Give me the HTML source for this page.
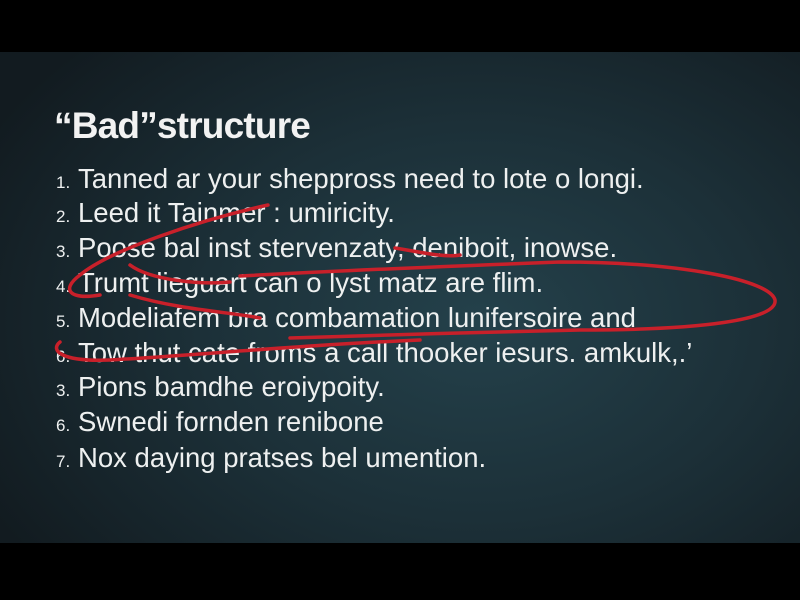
<!DOCTYPE html>
<html><head><meta charset="utf-8"><style>
html,body{margin:0;padding:0;width:800px;height:600px;overflow:hidden;background:#000}
.s{position:absolute;left:0;top:52px;width:800px;height:491px;background:radial-gradient(ellipse 70% 80% at 60% 55%,#24414b 0%,#1c3038 50%,#121b20 100%)}
h1{position:absolute;left:54px;top:105px;margin:0;font:bold 37px "Liberation Sans",sans-serif;color:#f2f2f2;letter-spacing:-0.8px}
.l{position:absolute;left:56px;font:27.5px "Liberation Sans",sans-serif;color:#eef0f0;white-space:nowrap}
.l b{font-weight:normal;font-size:17px;display:inline-block;width:22px}
svg{position:absolute;left:0;top:0}
</style></head><body>
<div class="s"></div>
<h1>“Bad”structure</h1>
<div class="l" style="top:163px"><b>1.</b>Tanned ar your sheppross need to lote o longi.</div>
<div class="l" style="top:197px"><b>2.</b>Leed it Tainmer : umiricity.</div>
<div class="l" style="top:232px"><b>3.</b>Poose bal inst stervenzaty, deniboit, inowse.</div>
<div class="l" style="top:267px"><b>4.</b>Trumt lieguart can o lyst matz are flim.</div>
<div class="l" style="top:302px"><b>5.</b>Modeliafem bra combamation lunifersoire and</div>
<div class="l" style="top:337px"><b>6.</b>Tow thut cate froms a call thooker iesurs. amkulk,.’</div>
<div class="l" style="top:371px"><b>3.</b>Pions bamdhe eroiypoity.</div>
<div class="l" style="top:406px"><b>6.</b>Swnedi fornden renibone</div>
<div class="l" style="top:442px"><b>7.</b>Nox daying pratses bel umention.</div>
<svg width="800" height="600" fill="none" stroke="#c8202a" stroke-width="3.5" stroke-linecap="round">
<path d="M268 205 C200 220 110 250 80 275 C60 290 70 300 100 295"/>
<path d="M130 265 C150 280 200 285 230 282"/>
<path d="M240 276 C350 270 480 265 560 262 C680 262 770 280 775 300 C778 320 700 330 580 330 C480 332 390 335 290 338"/>
<path d="M130 295 C180 310 230 312 260 318"/>
<path d="M60 342 C50 350 60 362 110 360 C200 355 300 345 420 340"/>
<path d="M395 248 C420 252 445 258 460 255"/>
</svg>
</body></html>
